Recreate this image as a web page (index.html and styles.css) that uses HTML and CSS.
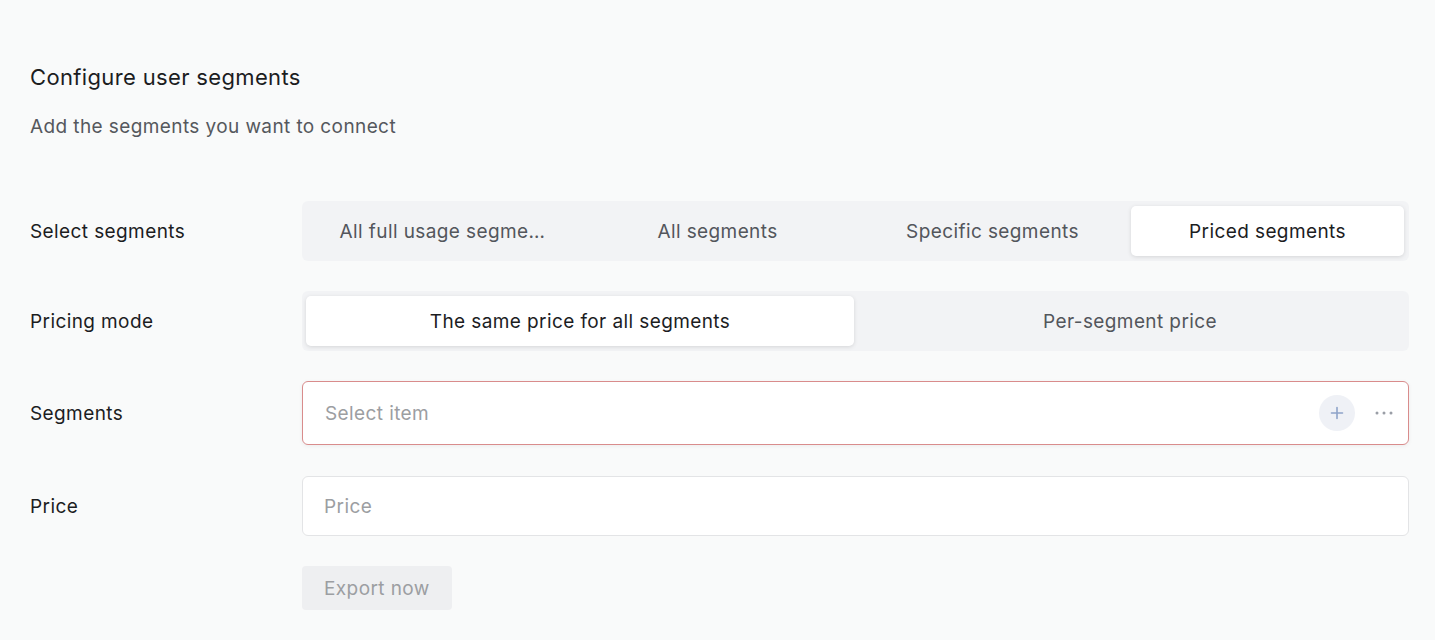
FILE: index.html
```html
<!DOCTYPE html>
<html lang="en">
<head>
  <meta charset="UTF-8">
  <meta name="viewport" content="width=device-width, initial-scale=1.0">
  <title>Configure user segments</title>
  <link rel="stylesheet" href="styles.css">
</head>
<body>
  <div class="page">
    <h1 class="title">Configure user segments</h1>
    <p class="subtitle">Add the segments you want to connect</p>

    <div class="form">
      <div class="row">
        <label class="label">Select segments</label>
        <div class="switcher switcher-4">
          <div class="tab">All full usage segme…</div>
          <div class="tab">All segments</div>
          <div class="tab">Specific segments</div>
          <div class="tab active">Priced segments</div>
        </div>
      </div>

      <div class="row">
        <label class="label">Pricing mode</label>
        <div class="switcher switcher-2">
          <div class="tab active">The same price for all segments</div>
          <div class="tab">Per-segment price</div>
        </div>
      </div>

      <div class="row">
        <label class="label">Segments</label>
        <div class="select error">
          <span class="placeholder">Select item</span>
          <div class="select-actions">
            <span class="add-btn">
              <svg width="14" height="14" viewBox="0 0 14 14"><path d="M7 1.5v11M1.5 7h11" stroke="#8ea3c9" stroke-width="1.6" fill="none" stroke-linecap="round"/></svg>
            </span>
            <span class="more-btn">
              <svg width="20" height="4" viewBox="0 0 20 4"><circle cx="3" cy="2" r="1.5" fill="#9a9ea6"/><circle cx="10" cy="2" r="1.5" fill="#9a9ea6"/><circle cx="17" cy="2" r="1.5" fill="#9a9ea6"/></svg>
            </span>
          </div>
        </div>
      </div>

      <div class="row row-price">
        <label class="label">Price</label>
        <input class="input" type="text" placeholder="Price">
      </div>

      <div class="row">
        <span class="label"></span>
        <button class="btn" disabled>Export now</button>
      </div>
    </div>
  </div>
</body>
</html>
```

FILE: styles.css
```css
body {
  margin: 0;
  background-color: #f9fafa;
  font-family: Inter, 'Noto Sans', sans-serif;
  color: #1c1d1f;
  letter-spacing: 0.4px;
}

.page {
  padding: 62px 26px 0 30px;
}

.title {
  margin: 0;
  font-size: 22px;
  font-weight: 400;
  line-height: 30px;
  letter-spacing: 0.35px;
}

.subtitle {
  margin: 23px 0 0;
  font-size: 19px;
  line-height: 24px;
  color: #55585d;
}

.form {
  margin-top: 62px;
  display: flex;
  flex-direction: column;
  gap: 30px;
}

.row {
  display: flex;
  align-items: center;
}

.row-price {
  margin-top: 1px;
}

.label {
  width: 272px;
  flex-shrink: 0;
  font-size: 19px;
}

.switcher {
  flex: 1;
  display: flex;
  gap: 2px;
  height: 60px;
  padding: 5px 5px 5px 4px;
  box-sizing: border-box;
  background-color: #f2f3f5;
  border-radius: 6px;
}

.tab {
  flex: 1;
  display: flex;
  align-items: center;
  justify-content: center;
  font-size: 19px;
  color: #53565c;
  border-radius: 5px;
}

.tab.active {
  background-color: #fff;
  color: #1c1d1f;
  box-shadow: 0 1px 4px rgba(0, 0, 0, 0.12);
}

.select {
  flex: 1;
  height: 64px;
  box-sizing: border-box;
  display: flex;
  align-items: center;
  justify-content: space-between;
  padding: 0 10px 0 22px;
  background-color: #fff;
  border: 1px solid #e5e6e8;
  border-radius: 6px;
  box-shadow: 0 1px 4px rgba(0, 0, 0, 0.06);
}

.select.error {
  border-color: #d98c8c;
}

.placeholder {
  font-size: 19px;
  color: #9c9ea2;
}

.select-actions {
  display: flex;
  align-items: center;
  gap: 19px;
}

.add-btn {
  width: 36px;
  height: 36px;
  border-radius: 50%;
  background-color: #eff1f6;
  display: flex;
  align-items: center;
  justify-content: center;
}

.more-btn {
  display: flex;
  align-items: center;
  padding-right: 4px;
}

.input {
  flex: 1;
  height: 60px;
  box-sizing: border-box;
  padding: 0 21px;
  font-family: inherit;
  font-size: 19px;
  letter-spacing: 0.4px;
  color: #1c1d1f;
  background-color: #fff;
  border: 1px solid #e3e4e6;
  border-radius: 6px;
  outline: none;
}

.input::placeholder {
  color: #9c9ea2;
}

.btn {
  height: 44px;
  padding: 0 22px;
  font-family: inherit;
  font-size: 19px;
  letter-spacing: 0.4px;
  color: #9c9ea2;
  background-color: #eeeff1;
  border: none;
  border-radius: 4px;
}
```
